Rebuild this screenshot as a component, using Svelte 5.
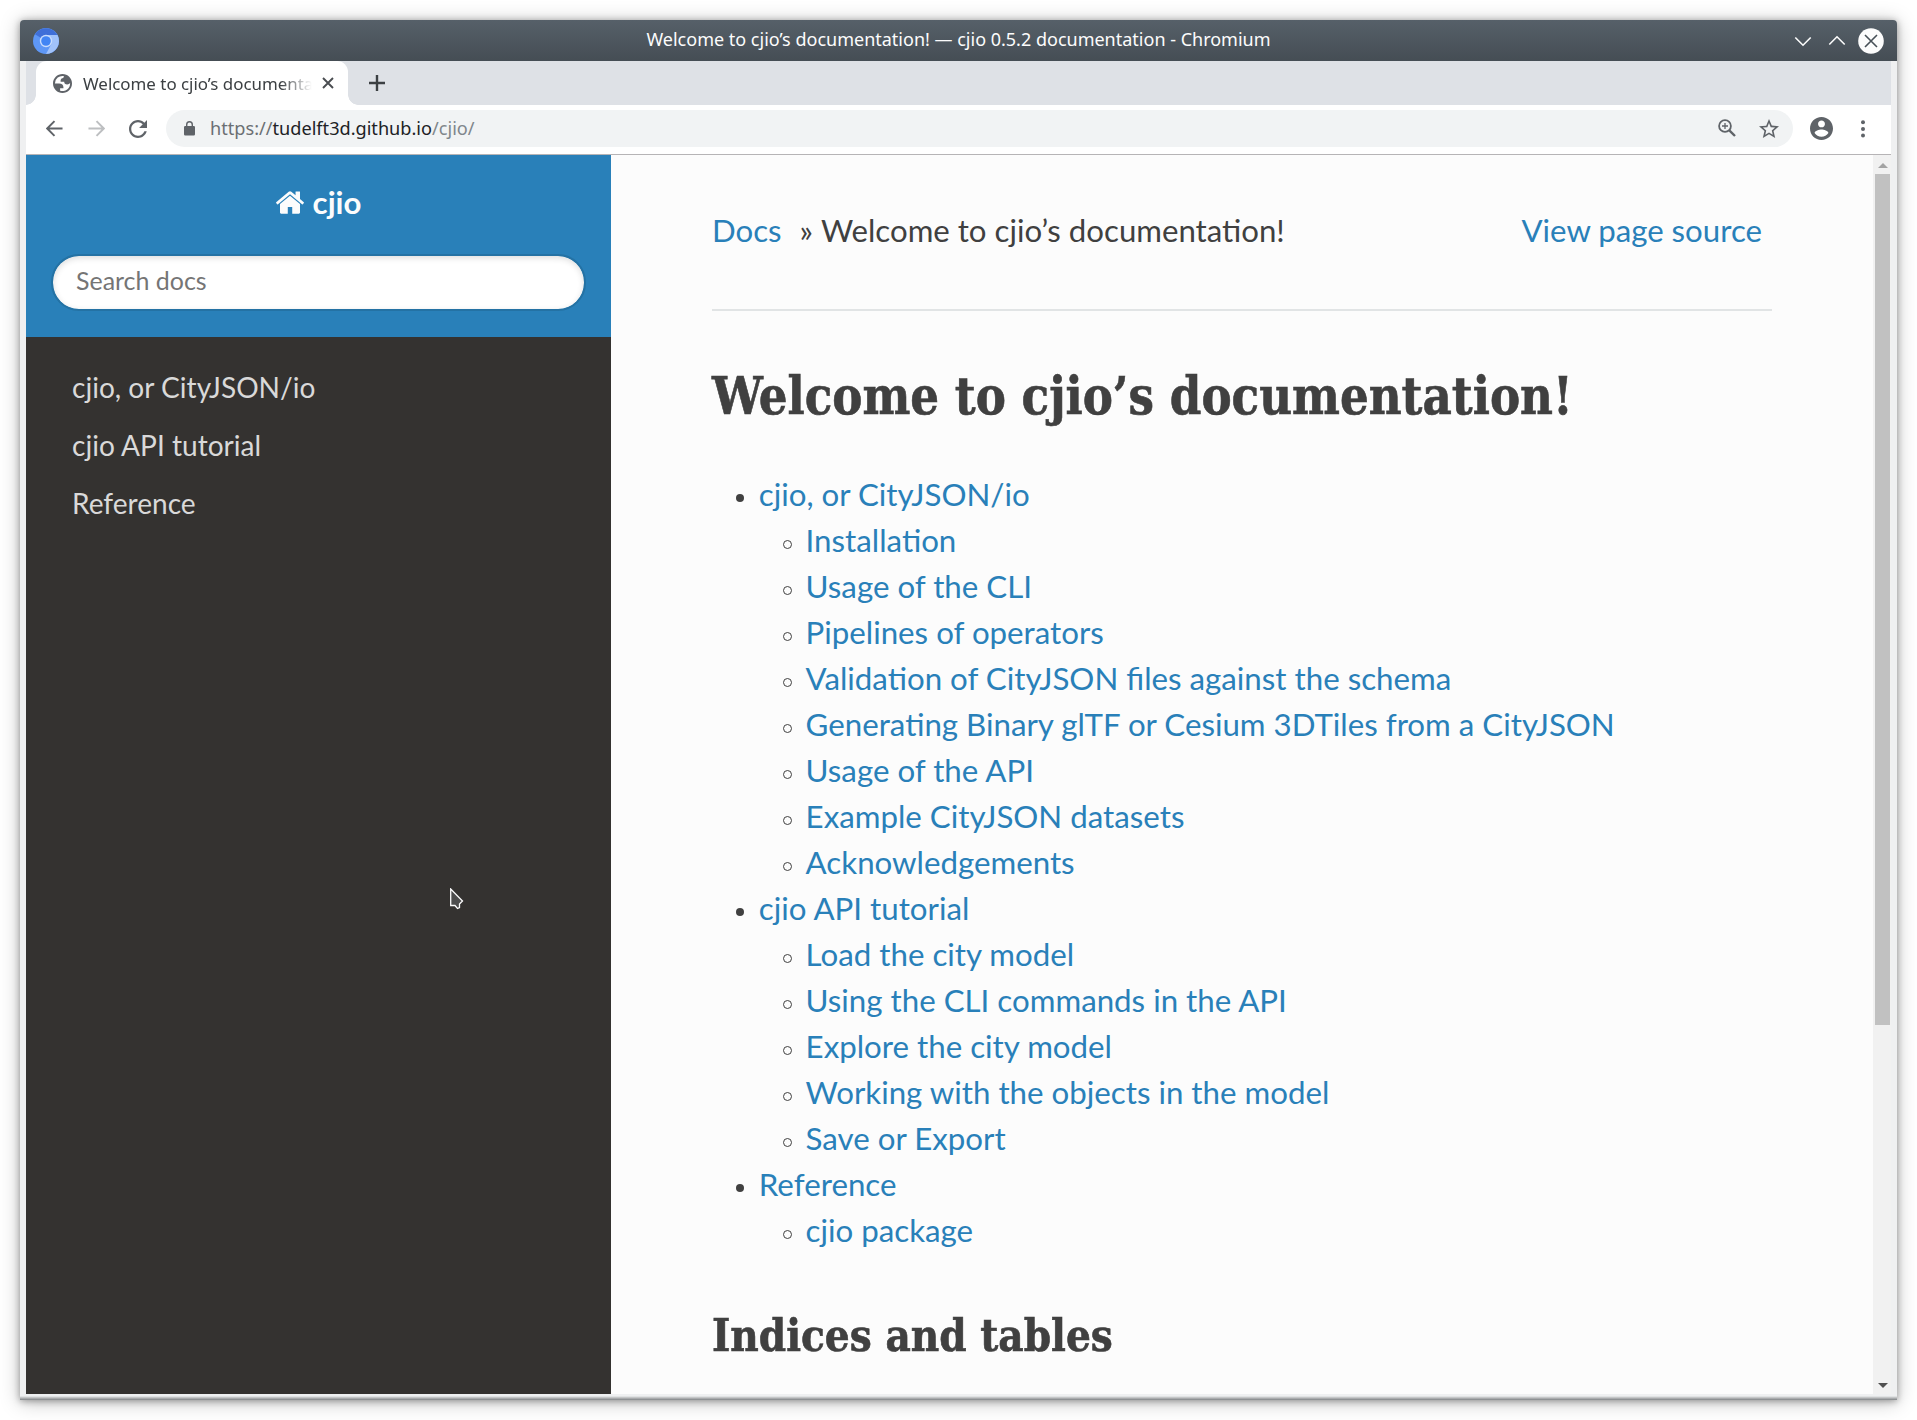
<script>
  const menu = ['cjio, or CityJSON/io', 'cjio API tutorial', 'Reference'];

  const contents = [
    {
      title: 'cjio, or CityJSON/io',
      children: [
        'Installation',
        'Usage of the CLI',
        'Pipelines of operators',
        'Validation of CityJSON files against the schema',
        'Generating Binary glTF or Cesium 3DTiles from a CityJSON',
        'Usage of the API',
        'Example CityJSON datasets',
        'Acknowledgements'
      ]
    },
    {
      title: 'cjio API tutorial',
      children: [
        'Load the city model',
        'Using the CLI commands in the API',
        'Explore the city model',
        'Working with the objects in the model',
        'Save or Export'
      ]
    },
    { title: 'Reference', children: ['cjio package'] }
  ];
</script>

<div class="desktop">
  <div class="window">
    <header class="titlebar">
      <svg class="logo" viewBox="0 0 26 26">
        <circle cx="13" cy="13" r="13" fill="#5e97f6" />
        <path d="M13 13 L2 6.2 A13 13 0 0 1 24.4 7 Z" fill="#3f6fd8" />
        <path d="M13 7 H24.5 A13 13 0 0 1 13 26 L18.4 16 Z" fill="#a1c2fa" />
        <circle cx="13" cy="13" r="6.2" fill="#c9dcfc" />
        <circle cx="13" cy="13" r="4.8" fill="#4285f4" />
      </svg>
      <span class="window-title">Welcome to cjio’s documentation! — cjio 0.5.2 documentation - Chromium</span>
      <div class="controls">
        <svg viewBox="0 0 26 26"><path d="M5.3 9.5 L13 17.2 L20.7 9.5" /></svg>
        <svg viewBox="0 0 26 26"><path d="M5.3 16.5 L13 8.8 L20.7 16.5" /></svg>
        <svg viewBox="0 0 26 26"><circle cx="13" cy="13" r="12.8" /><path class="dark" d="M7 7 L19 19 M19 7 L7 19" /></svg>
      </div>
    </header>

    <div class="frame">
      <div class="tabs">
        <div class="tab">
          <svg class="globe" viewBox="2 2 20 20"><path fill-rule="evenodd" d="M12 2C6.48 2 2 6.48 2 12s4.480 10 10 10 10-4.480 10-10S17.520 2 12 2zM4 12h4.400c3.407.022 4.922 1.730 4.543 5.127H9.488v2.470a8.004 8.004 0 0 0 10.498-8.083C19.327 12.504 18.332 13 17 13c-2.137 0-3.206-.916-3.206-2.750h-3.748c-.274-2.728.683-4.092 2.870-4.092 0-.975.327-1.597.811-1.970A8.004 8.004 0 0 0 4 12z" /></svg>
          <span class="tab-title">Welcome to cjio’s documentation!</span>
          <svg class="close" viewBox="0 0 12 12"><path d="M1 1 L11 11 M11 1 L1 11" /></svg>
        </div>
        <svg class="plus" viewBox="0 0 16 16"><path d="M8 0 V16 M0 8 H16" /></svg>
      </div>

      <div class="toolbar">
        <svg class="nav" viewBox="0 0 18 18"><path d="M17.500 9 H1.500 M9 1.200 L1.200 9 L9 16.800" /></svg>
        <svg class="nav off" viewBox="0 0 18 18"><path d="M0.500 9 H16.500 M9 1.200 L16.800 9 L9 16.800" /></svg>
        <svg class="nav reload" viewBox="4 4 16 16"><path d="M17.650 6.350C16.200 4.900 14.210 4 12 4c-4.420 0-7.990 3.580-7.990 8s3.570 8 7.990 8c3.730 0 6.840-2.550 7.730-6h-2.080c-.820 2.330-3.040 4-5.650 4-3.310 0-6-2.690-6-6s2.690-6 6-6c1.660 0 3.140.690 4.220 1.780L13 11h7V4l-2.350 2.350z" /></svg>
        <div class="omnibox">
          <svg class="lock" viewBox="0 0 11 15"><path d="M1.200 5 H2 V3.700 A3.500 3.600 0 0 1 9 3.700 V5 H9.800 A1.200 1.200 0 0 1 11 6.200 V13.300 A1.200 1.200 0 0 1 9.800 14.500 H1.200 A1.200 1.200 0 0 1 0 13.300 V6.200 A1.200 1.200 0 0 1 1.200 5 Z M3.400 5 H7.600 V3.700 A2.100 2.200 0 0 0 3.400 3.700 Z" fill-rule="evenodd" /></svg>
          <span class="url">https://<b>tudelft3d.github.io</b><i>/cjio/</i></span>
          <svg class="zoom" viewBox="0 0 18 18"><circle cx="7" cy="7" r="5.900" /><path d="M11.300 11.300 L17 17" class="handle" /><path d="M7 4 V10 M4 7 H10" class="thin" /></svg>
          <svg class="star" viewBox="2 2 20 19"><path d="M22 9.240l-7.190-.620L12 2 9.190 8.630 2 9.240l5.460 4.730L5.820 21 12 17.270 18.180 21l-1.630-7.030L22 9.240zM12 15.400l-3.760 2.270 1-4.280-3.320-2.880 4.380-.380L12 6.100l1.710 4.040 4.380.380-3.320 2.880 1 4.280L12 15.400z" /></svg>
        </div>
        <svg class="avatar" viewBox="2 2 20 20"><path d="M12 2C6.480 2 2 6.480 2 12s4.480 10 10 10 10-4.480 10-10S17.520 2 12 2zm0 3c1.660 0 3 1.340 3 3s-1.340 3-3 3-3-1.340-3-3 1.340-3 3-3zm0 14.200c-2.500 0-4.710-1.280-6-3.220.030-1.990 4-3.080 6-3.080 1.990 0 5.970 1.090 6 3.080-1.290 1.940-3.500 3.220-6 3.220z" /></svg>
        <svg class="dots" viewBox="0 0 4 18"><circle cx="2" cy="2.200" r="2" /><circle cx="2" cy="9" r="2" /><circle cx="2" cy="15.500" r="2" /></svg>
      </div>

      <div class="page">
        <aside>
          <div class="side-head">
            <div class="brand">
              <svg viewBox="25 253 1614 1283"><path d="M1408 992v480q0 26-19 45t-45 19h-384v-384h-256v384h-384q-26 0-45-19t-19-45v-480q0-1 .5-3t.5-3l575-474 575 474q1 2 1 6zm223-69l-62 74q-8 9-21 11h-3q-13 0-21-7l-692-577-692 577q-12 8-24 7-13-2-21-11l-62-74q-8-10-7-23.500t11-21.500l719-599q32-26 76-26t76 26l244 204v-195q0-14 9-23t23-9h192q14 0 23 9t9 23v408l219 182q10 8 11 21.500t-7 23.500z" /></svg>
              <span>cjio</span>
            </div>
            <div class="search">Search docs</div>
          </div>
          <nav>
            {#each menu as item}
              <a href="#top">{item}</a>
            {/each}
          </nav>
        </aside>

        <main>
          <div class="crumbs">
            <span><a href="#top">Docs</a><span class="sep">»</span>Welcome to cjio’s documentation!</span>
            <a href="#top">View page source</a>
          </div>
          <hr />
          <h1><span>Welcome to cjio’s documentation!</span></h1>
          <ul>
            {#each contents as section}
              <li>
                <a href="#top">{section.title}</a>
                <ul>
                  {#each section.children as child}
                    <li><a href="#top">{child}</a></li>
                  {/each}
                </ul>
              </li>
            {/each}
          </ul>
          <h2><span>Indices and tables</span></h2>
        </main>

        <div class="scrollbar">
          <svg class="up" viewBox="0 0 10 5"><path d="M0 5 L5 0 L10 5 Z" /></svg>
          <div class="thumb"></div>
          <svg class="down" viewBox="0 0 10 5"><path d="M0 0 L5 5 L10 0 Z" /></svg>
        </div>
      </div>
    </div>
    <div class="edge"></div>
  </div>

  <svg class="cursor" viewBox="0 0 14 22"><path d="M0.700 1 L12.500 13 L9.500 16 V19.500 L7.500 20.500 L5 17.500 H0.700 Z" /></svg>
</div>

<style>
  :global(body) {
    background: #fff;
    overflow: hidden;
  }
  .desktop {
    position: relative;
    box-sizing: border-box;
    width: 1917px;
    height: 1420px;
    padding: 20px;
    overflow: hidden;
    font-family: 'Noto Sans', sans-serif;
  }
  .window {
    width: 1877px;
    height: 1380px;
    display: flex;
    flex-direction: column;
    border-radius: 4px 4px 0 0;
    background: #eff0f1;
    box-shadow: 0 2px 20px rgba(0, 0, 0, 0.25), 0 1px 7px rgba(0, 0, 0, 0.35);
  }
  .edge {
    height: 4px;
    margin-top: 2px;
    background: linear-gradient(#e0e2e3 25%, #c4c6c7 25% 50%, #a9abad 50% 75%, #8e9193 75%);
  }
  .titlebar {
    flex: none;
    height: 41px;
    box-sizing: border-box;
    padding: 0 13px;
    display: grid;
    grid-template-columns: 94px 1fr 94px;
    align-items: center;
    border-radius: 4px 4px 0 0;
    background: linear-gradient(#566069, #454d54);
    color: #fcfcfc;
  }
  .logo {
    width: 26px;
    height: 26px;
  }
  .window-title {
    height: 41px;
    text-align: center;
    font-size: 18px;
    line-height: 39px;
    white-space: nowrap;
  }
  .controls {
    display: flex;
    justify-content: flex-end;
    gap: 8px;
  }
  .controls svg {
    flex: none;
    width: 26px;
    height: 26px;
    fill: none;
    stroke: #fcfcfc;
    stroke-width: 1.6;
  }
  .controls circle {
    fill: #fcfcfc;
    stroke: none;
  }
  .controls .dark {
    stroke: #475057;
  }
  .frame {
    flex: none;
    margin: 0 6px;
    height: 1333px;
    display: flex;
    flex-direction: column;
    background: #fff;
  }
  .tabs {
    flex: none;
    height: 44px;
    padding-left: 10px;
    display: flex;
    align-items: center;
    background: #dee1e6;
  }
  .tab {
    position: relative;
    box-sizing: border-box;
    width: 312px;
    height: 44px;
    padding: 0 14px 0 17px;
    display: flex;
    align-items: center;
    border-radius: 11px 11px 0 0;
    background: #fff;
  }
  .tab::before,
  .tab::after {
    content: '';
    position: absolute;
    bottom: 0;
    width: 10px;
    height: 10px;
  }
  .tab::before {
    left: -10px;
    background: radial-gradient(circle at 0 0, #dee1e6 9.5px, #fff 10px);
  }
  .tab::after {
    right: -10px;
    background: radial-gradient(circle at 100% 0, #dee1e6 9.5px, #fff 10px);
  }
  .globe {
    flex: none;
    width: 19px;
    height: 19px;
    fill: #5f6368;
  }
  .tab-title {
    width: 229px;
    height: 44px;
    margin-left: 11px;
    overflow: hidden;
    white-space: nowrap;
    font-size: 16.9px;
    line-height: 45px;
    color: #3c4043;
    -webkit-mask-image: linear-gradient(90deg, #000 198px, transparent 229px);
    mask-image: linear-gradient(90deg, #000 198px, transparent 229px);
  }
  .close {
    flex: none;
    width: 12px;
    height: 12px;
    margin-left: 10px;
    stroke: #4a4d51;
    stroke-width: 1.9;
  }
  .plus {
    width: 16px;
    height: 16px;
    margin-left: 21px;
    stroke: #3c4043;
    stroke-width: 2.4;
  }
  .toolbar {
    flex: none;
    box-sizing: border-box;
    height: 50px;
    padding: 5px 26px 7px 20px;
    display: flex;
    align-items: center;
    border-bottom: 1px solid #b6b4b6;
  }
  .nav {
    flex: none;
    width: 17px;
    height: 17px;
    margin-right: 25px;
    fill: none;
    stroke: #5f6368;
    stroke-width: 2.1;
  }
  .nav.off {
    stroke: #bdbfc1;
    margin-right: 24px;
  }
  .nav.reload {
    width: 18px;
    height: 18px;
    margin-right: 19px;
    fill: #5f6368;
    stroke: none;
  }
  .omnibox {
    flex: none;
    box-sizing: border-box;
    width: 1627px;
    height: 37px;
    padding: 0 14px 1px 18px;
    display: flex;
    align-items: center;
    border-radius: 19px;
    background: #f1f3f4;
  }
  .lock {
    width: 11px;
    height: 15px;
    fill: #5f6368;
  }
  .url {
    flex: 1;
    margin-left: 15px;
    font-size: 18.15px;
    line-height: 36px;
    color: #6b6f73;
  }
  .url b {
    font-weight: 400;
    color: #202124;
  }
  .url i {
    font-style: normal;
    color: #80868b;
  }
  .zoom {
    width: 18px;
    height: 18px;
    margin-right: 23px;
    fill: none;
    stroke: #5f6368;
    stroke-width: 1.8;
  }
  .zoom .handle {
    stroke-width: 2.4;
  }
  .zoom .thin {
    stroke-width: 1.3;
  }
  .star {
    width: 20px;
    height: 19px;
    fill: #5f6368;
  }
  .avatar {
    width: 23px;
    height: 23px;
    margin-left: 17px;
    fill: #5f6368;
  }
  .dots {
    width: 4px;
    height: 18px;
    margin-left: 28px;
    fill: #5f6368;
  }
  .page {
    flex: 1;
    min-height: 0;
    display: flex;
    background: #fcfcfc;
    font-family: Lato, sans-serif;
    color: #404040;
  }
  aside {
    width: 585px;
    flex: none;
    background: #343230;
  }
  .side-head {
    box-sizing: border-box;
    height: 182px;
    padding: 24px 25px 0;
    background: #2980b9;
  }
  .brand {
    display: flex;
    justify-content: center;
    align-items: center;
    gap: 9px;
    height: 46px;
    color: #fcfcfc;
    font-size: 31.2px;
    font-weight: 700;
    line-height: 46px;
  }
  .brand svg {
    width: 28px;
    height: 23px;
    fill: #fcfcfc;
  }
  .search {
    box-sizing: border-box;
    width: 535px;
    height: 57px;
    margin-top: 29px;
    padding: 0 23px;
    border: 2px solid #2472a4;
    border-radius: 28px;
    background: #fff;
    background-clip: padding-box;
    box-shadow: inset 0 2px 6px #ddd;
    color: #757575;
    font-size: 24.96px;
    line-height: 48px;
  }
  nav {
    padding-top: 21px;
  }
  nav a {
    display: block;
    height: 58px;
    padding-left: 46px;
    color: #d9d9d9;
    font-size: 28.08px;
    line-height: 58px;
    text-decoration: none;
  }
  main {
    flex: 1;
    min-width: 0;
    padding: 52px 101px 0;
    font-size: 31.2px;
    line-height: 46px;
    overflow: hidden;
  }
  main a {
    color: #2980b9;
    text-decoration: none;
  }
  .crumbs {
    display: flex;
    justify-content: space-between;
    padding-right: 10px;
    height: 46px;
    white-space: nowrap;
  }
  .sep {
    margin: 0 8px 0 18px;
  }
  hr {
    margin: 56px 0 0;
    border: 0;
    height: 2px;
    background: #e1e4e5;
  }
  h1,
  h2 {
    margin: 0;
    font-family: 'Roboto Slab', 'DejaVu Serif Condensed', 'DejaVu Serif', serif;
    font-weight: 700;
    white-space: nowrap;
    -webkit-text-stroke: 0.6px #404040;
  }
  h1 {
    margin-top: 51px;
    height: 109px;
    font-size: 52px;
    line-height: 68px;
  }
  h2 {
    margin-top: 49px;
    font-size: 45px;
    line-height: 68px;
  }
  /* Narrows the wide serif face to the proportions of a slab heading */
  h1 span,
  h2 span {
    display: inline-block;
    transform-origin: 0 50%;
    transform: scaleX(0.967);
  }
  ul {
    margin: 0;
    padding: 0;
    list-style: none;
    font-size: 31.25px;
  }
  li {
    position: relative;
    margin-left: 46.8px;
  }
  li::before {
    content: '';
    position: absolute;
    left: -23px;
    top: 23px;
    box-sizing: border-box;
    width: 8px;
    height: 8px;
    border-radius: 50%;
    background: #404040;
  }
  li li::before {
    width: 9px;
    height: 9px;
    border: 1px solid #404040;
    background: none;
  }
  .scrollbar {
    flex: none;
    box-sizing: border-box;
    width: 18px;
    padding: 8px 1px 6px 2px;
    display: flex;
    flex-direction: column;
    align-items: center;
    background: #f1f1f1;
  }
  .scrollbar svg {
    width: 10px;
    height: 5px;
  }
  .up {
    fill: #a3a3a3;
  }
  .down {
    margin-top: auto;
    fill: #505050;
  }
  .thumb {
    width: 15px;
    height: 851px;
    margin-top: 6px;
    background: #c1c1c1;
  }
  .cursor {
    position: absolute;
    left: 450px;
    top: 888px;
    width: 14px;
    height: 22px;
    fill: #4d4d4d;
    stroke: #fcfcfc;
    stroke-width: 1.3;
  }
</style>
